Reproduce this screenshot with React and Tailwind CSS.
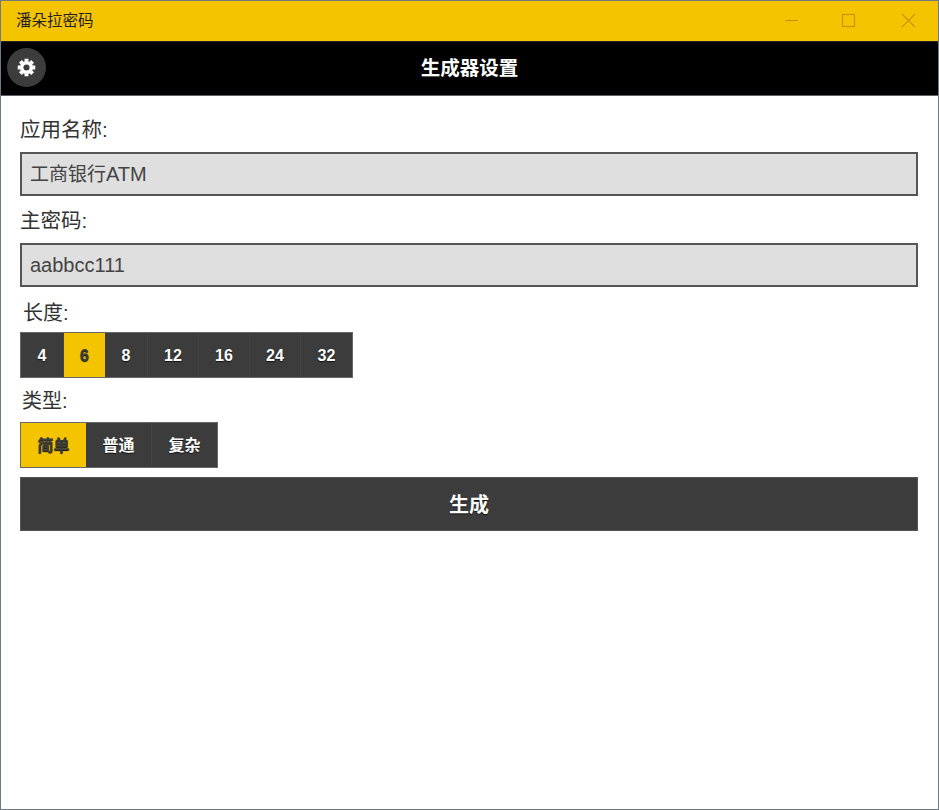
import React from "react";

const font = "[font-family:'Liberation_Sans','Noto_Sans_CJK_SC',sans-serif]";

function Segment({ items, active, widths }) {
  return (
    <div className="flex w-fit h-[46px] border border-[#666] bg-[#3c3c3c]">
      {items.map((t, i) => (
        <div
          key={t}
          style={{ width: widths[i] }}
          className={
            "flex items-center justify-center pt-[1px] text-[16px] font-bold [text-shadow:0_1px_1px_#111] " +
            (t === active
              ? "bg-[#f5c400] text-[#3c3c3c]"
              : "text-white border-r border-[#444] last:border-r-0")
          }
        >
          {t}
        </div>
      ))}
    </div>
  );
}

function Field({ children }) {
  return (
    <div className="h-[44px] border-2 border-[#555] bg-[#dfdfdf] pl-[8px] flex items-center text-[20px] text-[#444]">
      <span>{children}</span>
    </div>
  );
}

export default function App() {
  return (
    <div className={"w-[939px] h-[810px] border border-[#6f7a82] bg-white flex flex-col overflow-hidden " + font}>
      <div className="h-[40px] shrink-0 bg-[#f5c400] flex items-center pl-[15px] text-[15.5px] text-[#222]">
        <span className="flex-1">潘朵拉密码</span>
        <svg width="150" height="40" viewBox="0 0 150 40" fill="none" stroke="#c9960a" strokeWidth="1.2" className="mr-[18px]">
          <path d="M15 19.5H28" />
          <rect x="72.5" y="13.5" width="12" height="12" />
          <path d="M132 13L145 26M145 13L132 26" />
        </svg>
      </div>
      <div className="relative h-[55px] shrink-0 bg-black border-y border-t-[#222] border-b-[#5b6065] flex items-center justify-center text-[19.5px] font-bold text-white [text-shadow:0_1px_1px_#111]">
        <div className="absolute left-[6px] top-[6px] w-[39px] h-[39px] rounded-full bg-[#3c3c3c] flex items-center justify-center">
          <svg width="21" height="21" viewBox="0 0 24 24" fill="none" stroke="white" strokeWidth="4" strokeLinejoin="round">
            <circle cx="12" cy="12" r="5.5" />
            <path d="M12 2v3M12 19v3M2 12h3M19 12h3M5 5l2 2M17 17l2 2M5 19l2-2M17 7l2-2" strokeWidth="4.5" />
          </svg>
        </div>
        生成器设置
      </div>
      <div className="flex flex-col pl-[19px] pr-[20px] text-[#333]">
        <div className="text-[20.5px] leading-[28px] mt-[20px] mb-[8px]">应用名称:</div>
        <Field><span className="text-[19px]">工商银行</span>ATM</Field>
        <div className="text-[20.5px] leading-[28px] mt-[11px] mb-[8px]">主密码:</div>
        <Field>aabbcc111</Field>
        <div className="text-[20px] leading-[28px] mt-[12px] mb-[5px] pl-[3px]">长度:</div>
        <Segment items={["4", "6", "8", "12", "16", "24", "32"]} active="6" widths={[43, 41, 43, 51, 51, 51, 51]} />
        <div className="text-[20px] leading-[28px] mt-[9px] mb-[7px] pl-[2px]">类型:</div>
        <Segment items={["简单", "普通", "复杂"]} active="简单" widths={[65, 66, 65]} />
        <div className="mt-[9px] h-[54px] pt-[1px] bg-[#3c3c3c] border border-[#555] flex items-center justify-center text-[20px] font-bold text-white [text-shadow:0_1px_1px_#111]">
          生成
        </div>
      </div>
    </div>
  );
}
